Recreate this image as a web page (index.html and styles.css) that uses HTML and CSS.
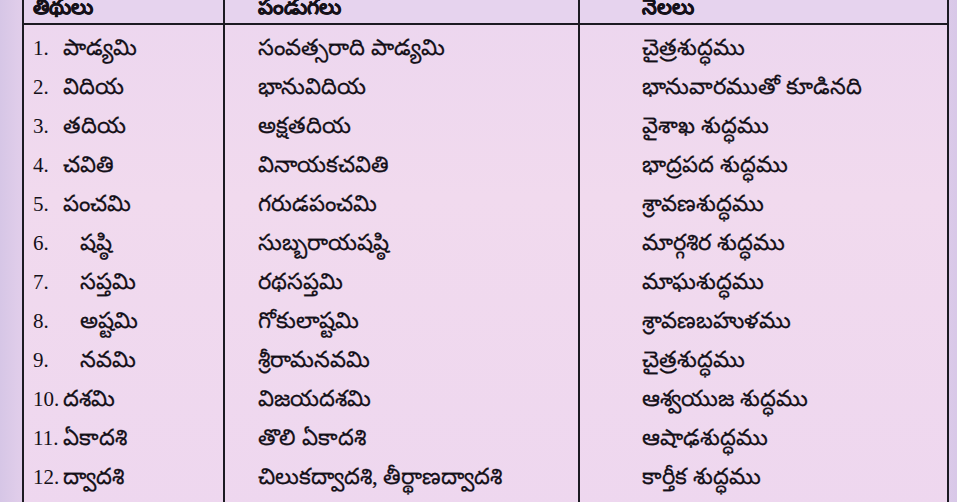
FILE: index.html
```html
<!DOCTYPE html>
<html lang="te">
<head>
<meta charset="utf-8">
<title>తిథులు</title>
<link rel="stylesheet" href="styles.css">
</head>
<body>
<div class="page">
  <div class="table">
    <div class="row head">
      <div class="cell c1">తిథులు</div>
      <div class="cell c2">పండుగలు</div>
      <div class="cell c3">నెలలు</div>
    </div>
    <div class="row"><div class="cell c1"><span class="num">1.</span>పాడ్యమి</div><div class="cell c2">సంవత్సరాది పాడ్యమి</div><div class="cell c3">చైత్రశుద్ధము</div></div>
    <div class="row"><div class="cell c1"><span class="num">2.</span>విదియ</div><div class="cell c2">భానువిదియ</div><div class="cell c3">భానువారముతో కూడినది</div></div>
    <div class="row"><div class="cell c1"><span class="num">3.</span>తదియ</div><div class="cell c2">అక్షతదియ</div><div class="cell c3">వైశాఖ శుద్ధము</div></div>
    <div class="row"><div class="cell c1"><span class="num">4.</span>చవితి</div><div class="cell c2">వినాయకచవితి</div><div class="cell c3">భాద్రపద శుద్ధము</div></div>
    <div class="row"><div class="cell c1"><span class="num">5.</span>పంచమి</div><div class="cell c2">గరుడపంచమి</div><div class="cell c3">శ్రావణశుద్ధము</div></div>
    <div class="row"><div class="cell c1"><span class="num wide">6.</span>షష్ఠి</div><div class="cell c2">సుబ్బరాయషష్ఠి</div><div class="cell c3">మార్గశిర శుద్ధము</div></div>
    <div class="row"><div class="cell c1"><span class="num wide">7.</span>సప్తమి</div><div class="cell c2">రథసప్తమి</div><div class="cell c3">మాఘశుద్ధము</div></div>
    <div class="row"><div class="cell c1"><span class="num wide">8.</span>అష్టమి</div><div class="cell c2">గోకులాష్టమి</div><div class="cell c3">శ్రావణబహుళము</div></div>
    <div class="row"><div class="cell c1"><span class="num wide">9.</span>నవమి</div><div class="cell c2">శ్రీరామనవమి</div><div class="cell c3">చైత్రశుద్ధము</div></div>
    <div class="row"><div class="cell c1"><span class="num">10.</span>దశమి</div><div class="cell c2">విజయదశమి</div><div class="cell c3">ఆశ్వయుజ శుద్ధము</div></div>
    <div class="row"><div class="cell c1"><span class="num">11.</span>ఏకాదశి</div><div class="cell c2">తొలి ఏకాదశి</div><div class="cell c3">ఆషాఢశుద్ధము</div></div>
    <div class="row"><div class="cell c1"><span class="num">12.</span>ద్వాదశి</div><div class="cell c2">చిలుకద్వాదశి, తీర్థాణద్వాదశి</div><div class="cell c3">కార్తీక శుద్ధము</div></div>
    <div class="row tail"><div class="cell c1"></div><div class="cell c2"></div><div class="cell c3"></div></div>
  </div>
</div>
</body>
</html>
```

FILE: styles.css
```css
html, body {
  margin: 0;
  padding: 0;
}
body {
  width: 957px;
  height: 502px;
  overflow: hidden;
  background: linear-gradient(90deg, #d6c6e6 0%, #e0cdea 2%, #e3cfeb 97%, #d8c8e8 100%);
  font-family: "Liberation Serif", "Noto Sans", serif;
  color: #141018;
}
.page {
  padding-left: 22px;
}
.table {
  width: 923px;
  border-left: 2px solid #1c1a22;
  border-right: 2px solid #1c1a22;
  background: linear-gradient(180deg, #ecd6ef 0%, #f1daee 40%, #eed7ef 100%);
  margin-top: -14px;
}
.row {
  display: grid;
  grid-template-columns: 201px 355px 1fr;
  height: 39px;
}
.head {
  height: 37px;
  border-bottom: 2px solid #1c1a22;
  background: #e6d3ee;
  font-weight: bold;
}
.tail {
  height: 20px;
}
.cell {
  display: block;
  box-sizing: border-box;
  padding-top: 7px;
  line-height: 32px;
  font-size: 22.5px;
  white-space: nowrap;
  -webkit-text-stroke: 0.25px #141018;
}
.head .cell {
  padding-top: 6px;
  line-height: 30px;
  font-size: 21px;
}
.c1 {
  padding-left: 9px;
  border-right: 2px solid #1c1a22;
}
.c2 {
  padding-left: 33px;
  border-right: 2px solid #1c1a22;
}
.c3 {
  padding-left: 62px;
}
.num {
  display: inline-block;
  width: 30px;
  font-size: 21px;
  -webkit-text-stroke: 0;
}
.num.wide {
  width: 47px;
}
```
